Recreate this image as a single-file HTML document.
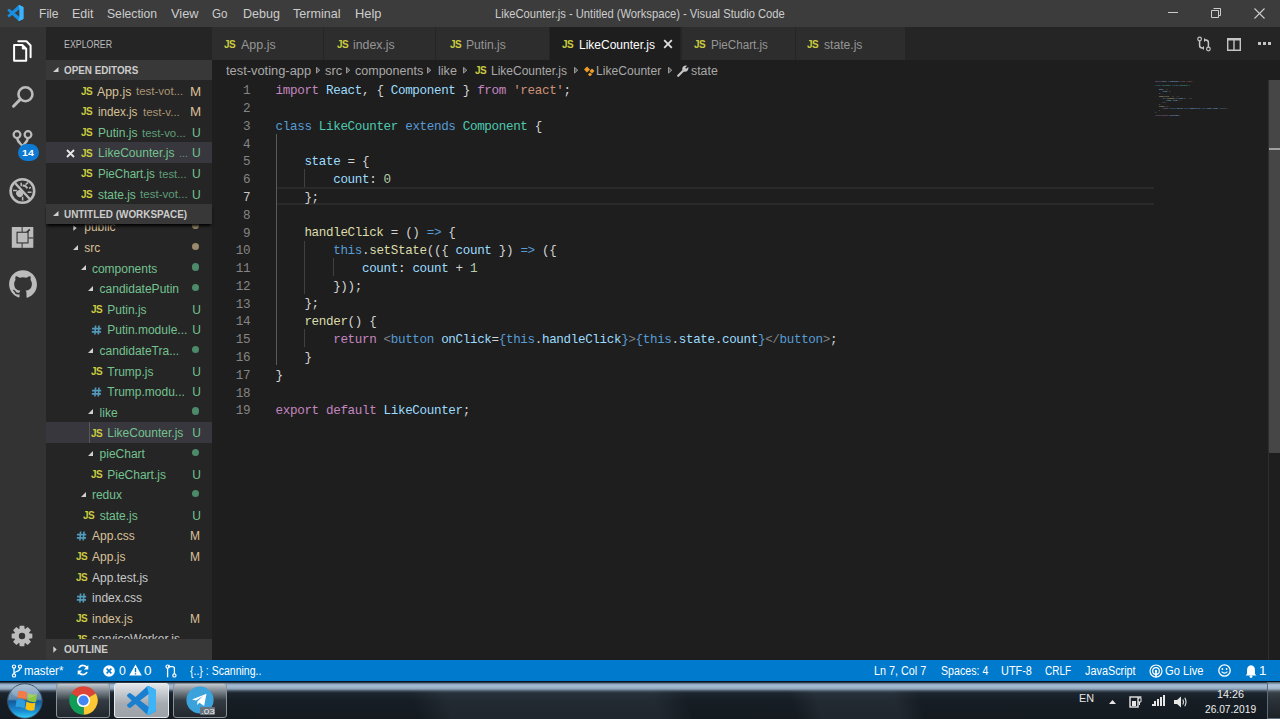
<!DOCTYPE html>
<html><head><meta charset="utf-8"><style>
html,body{margin:0;padding:0;width:1280px;height:719px;overflow:hidden;background:#1e1e1e;font-family:'Liberation Sans', sans-serif;}
#root{position:relative;width:1280px;height:719px;overflow:hidden;}
</style></head><body><div id="root">
<div style="position:absolute;left:0px;top:0px;width:1280px;height:27px;background:#3c3c3c;"></div>
<div style="position:absolute;left:0px;top:27px;width:46px;height:633px;background:#333333;"></div>
<div style="position:absolute;left:46px;top:27px;width:166px;height:633px;background:#252526;"></div>
<div style="position:absolute;left:212px;top:27px;width:1068px;height:33px;background:#252526;"></div>
<div style="position:absolute;left:212px;top:60px;width:1068px;height:600px;background:#1e1e1e;"></div>
<svg style="position:absolute;left:7px;top:5px;" width="17" height="16" viewBox="0 0 100 100"><path fill="#1a8ee0" d="M96.46 10.8L75.86.87a6.23 6.23 0 00-7.1 1.21L29.35 38.04 12.19 25.01a4.16 4.16 0 00-5.32.24L1.36 30.26a4.16 4.16 0 000 6.16L16.25 50 1.36 63.58a4.16 4.16 0 000 6.16l5.51 5.01a4.16 4.16 0 005.32.24l17.16-13.03 39.41 35.96a6.23 6.23 0 007.1 1.21l20.6-9.92A6.25 6.25 0 00100 83.8V16.2a6.25 6.25 0 00-3.54-5.4zM75.02 72.7L45.11 50l29.91-22.7z"/><path fill="#3cb4f7" d="M75.86.87L96.46 10.8A6.25 6.25 0 0 1 100 16.2V83.8A6.25 6.25 0 0 1 96.46 89.2L75.86 99.13A6.23 6.23 0 0 1 68.76 97.92L75.02 72.7V27.3L68.76 2.08A6.23 6.23 0 0 1 75.86.87z"/></svg>
<div style="position:absolute;left:38.97px;top:7.67px;font-family:'Liberation Sans', sans-serif;font-size:12.2px;line-height:12.2px;font-weight:400;color:#cccccc;white-space:pre;transform:scaleX(0.9961);transform-origin:0 0;">File</div>
<div style="position:absolute;left:72.27px;top:7.67px;font-family:'Liberation Sans', sans-serif;font-size:12.2px;line-height:12.2px;font-weight:400;color:#cccccc;white-space:pre;transform:scaleX(1.0213);transform-origin:0 0;">Edit</div>
<div style="position:absolute;left:107.27px;top:7.67px;font-family:'Liberation Sans', sans-serif;font-size:12.2px;line-height:12.2px;font-weight:400;color:#cccccc;white-space:pre;transform:scaleX(0.9985);transform-origin:0 0;">Selection</div>
<div style="position:absolute;left:170.67px;top:7.67px;font-family:'Liberation Sans', sans-serif;font-size:12.2px;line-height:12.2px;font-weight:400;color:#cccccc;white-space:pre;transform:scaleX(1.0519);transform-origin:0 0;">View</div>
<div style="position:absolute;left:211.77px;top:7.67px;font-family:'Liberation Sans', sans-serif;font-size:12.2px;line-height:12.2px;font-weight:400;color:#cccccc;white-space:pre;transform:scaleX(0.9507);transform-origin:0 0;">Go</div>
<div style="position:absolute;left:242.57px;top:7.67px;font-family:'Liberation Sans', sans-serif;font-size:12.2px;line-height:12.2px;font-weight:400;color:#cccccc;white-space:pre;transform:scaleX(1.0276);transform-origin:0 0;">Debug</div>
<div style="position:absolute;left:293.27px;top:7.67px;font-family:'Liberation Sans', sans-serif;font-size:12.2px;line-height:12.2px;font-weight:400;color:#cccccc;white-space:pre;transform:scaleX(1.0304);transform-origin:0 0;">Terminal</div>
<div style="position:absolute;left:355.07px;top:7.67px;font-family:'Liberation Sans', sans-serif;font-size:12.2px;line-height:12.2px;font-weight:400;color:#cccccc;white-space:pre;transform:scaleX(1.0553);transform-origin:0 0;">Help</div>
<div style="position:absolute;left:494.77px;top:7.67px;font-family:'Liberation Sans', sans-serif;font-size:12.2px;line-height:12.2px;font-weight:400;color:#cccccc;white-space:pre;transform:scaleX(0.9171);transform-origin:0 0;">LikeCounter.js - Untitled (Workspace) - Visual Studio Code</div>
<div style="position:absolute;left:1168px;top:12px;width:10px;height:1px;background:#cccccc;"></div>
<svg style="position:absolute;left:1210px;top:7px;" width="12" height="12" viewBox="0 0 12 12"><path d="M3.5 1.5h7v7h-2M1.5 3.5h7v7h-7z" fill="none" stroke="#cccccc" stroke-width="1"/></svg>
<svg style="position:absolute;left:1253px;top:7px;" width="12" height="12" viewBox="0 0 12 12"><path d="M1.5 1.5l10 10M11.5 1.5l-10 10" stroke="#cccccc" stroke-width="1.1"/></svg>
<svg style="position:absolute;left:0;top:27px" width="46" height="46" viewBox="0 27 46 46"><path d="M14.1 45.1H22.6L26.2 48.7V60.7H14.1Z" fill="none" stroke="#fff" stroke-width="2" stroke-linejoin="round"/><path d="M22.3 45.1V49H26.2Z" fill="#fff" stroke="#fff" stroke-width="1"/><path d="M18.3 41.3H26.4L30.6 45.5V57.3" fill="none" stroke="#fff" stroke-width="2" stroke-linecap="round" stroke-linejoin="round"/></svg>
<svg style="position:absolute;left:9px;top:82px;" width="28" height="28" viewBox="0 0 28 28"><circle cx="16.45" cy="12.25" r="7" fill="none" stroke="#bcbcbc" stroke-width="2.6"/><path d="M11.3 17.4 4.5 24.2" stroke="#bcbcbc" stroke-width="3" stroke-linecap="round"/></svg>
<svg style="position:absolute;left:8px;top:126px;" width="30" height="22" viewBox="0 0 30 22"><circle cx="9" cy="8.6" r="3.4" fill="none" stroke="#bcbcbc" stroke-width="2.2"/><circle cx="20" cy="8.6" r="3.4" fill="none" stroke="#bcbcbc" stroke-width="2.2"/><path d="M9 12 C9.5 16 13 18 14.5 20 M20 12 C19.5 16 16 18 14.5 20" fill="none" stroke="#bcbcbc" stroke-width="2.4"/></svg>
<div style="position:absolute;left:18px;top:143.7px;width:20.5px;height:17.3px;background:#0e7ad3;border-radius:9px"></div>
<div style="position:absolute;left:22.12px;top:147.67px;font-family:'Liberation Sans', sans-serif;font-size:9.6px;line-height:9.6px;font-weight:700;color:#ffffff;white-space:pre;transform:scaleX(1.1012);transform-origin:0 0;">14</div>
<svg style="position:absolute;left:0;top:166px" width="46" height="46" viewBox="0 166 46 46"><circle cx="22.4" cy="191" r="11.8" fill="none" stroke="#bcbcbc" stroke-width="2.6"/><path d="M15.2 183.2L29.8 199" stroke="#bcbcbc" stroke-width="2.4"/><ellipse cx="19.6" cy="193.6" rx="3.3" ry="3.6" transform="rotate(-45 19.6 193.6)" fill="#bcbcbc"/><path d="M22.6 185.5Q25.8 185.4 27.4 188.4" fill="none" stroke="#bcbcbc" stroke-width="1.8"/><path d="M13 190.6H17M21.2 182.8V186.2M27.6 192.3H31.5M22.6 196.8V200.4M25.5 184.6L28 182.6M29 188.2L31 187.4" stroke="#bcbcbc" stroke-width="1.5"/></svg>
<svg style="position:absolute;left:0;top:212px" width="46" height="46" viewBox="0 212 46 46"><rect x="11.8" y="227" width="21.5" height="20.8" fill="#bcbcbc"/><rect x="16.5" y="231.7" width="12.1" height="11.8" fill="#333333"/><rect x="21.6" y="227" width="1" height="20.8" fill="#333333"/><rect x="28.5" y="237.4" width="4.8" height="1.1" fill="#333333"/><path d="M25.6 233.6L29.8 229.4" stroke="#333333" stroke-width="1.6"/><rect x="17.6" y="232.8" width="9.9" height="9.6" fill="#bcbcbc"/></svg>
<svg style="position:absolute;left:9px;top:270px;" width="28" height="28" viewBox="0 0 28 28"><path fill="#bcbcbc" d="M14 0.3C6.3 0.3 0.1 6.5 0.1 14.2c0 6.1 4 11.3 9.5 13.2.7.1.95-.3.95-.67v-2.36c-3.87.84-4.68-1.64-4.68-1.64-.63-1.6-1.55-2.03-1.55-2.03-1.26-.86.1-.85.1-.85 1.4.1 2.13 1.43 2.13 1.43 1.24 2.13 3.26 1.52 4.06 1.16.12-.9.49-1.52.88-1.87-3.09-.35-6.34-1.55-6.34-6.88 0-1.52.54-2.76 1.43-3.73-.14-.35-.62-1.77.14-3.69 0 0 1.17-.37 3.82 1.43a13.3 13.3 0 0 1 6.96 0c2.65-1.8 3.82-1.43 3.82-1.43.76 1.92.28 3.34.14 3.69.89.97 1.43 2.21 1.43 3.73 0 5.34-3.25 6.52-6.35 6.87.5.43.94 1.28.94 2.58v3.82c0 .37.25.8.96.67 5.5-1.84 9.5-7.05 9.5-13.2C27.9 6.5 21.7.3 14 .3z"/></svg>
<svg style="position:absolute;left:11.4px;top:625.4px;" width="22" height="22" viewBox="0 0 22 22"><path fill="#bcbcbc" fill-rule="evenodd" d="M21.34 8.69 L21.34 13.31 L18.11 13.68 L17.92 14.14 L19.95 16.68 L16.68 19.95 L14.14 17.92 L13.68 18.11 L13.31 21.34 L8.69 21.34 L8.32 18.11 L7.86 17.92 L5.32 19.95 L2.05 16.68 L4.08 14.14 L3.89 13.68 L0.66 13.31 L0.66 8.69 L3.89 8.32 L4.08 7.86 L2.05 5.32 L5.32 2.05 L7.86 4.08 L8.32 3.89 L8.69 0.66 L13.31 0.66 L13.68 3.89 L14.14 4.08 L16.68 2.05 L19.95 5.32 L17.92 7.86 L18.11 8.32Z M14.2 11 A3.2 3.2 0 1 0 7.8 11 A3.2 3.2 0 1 0 14.2 11Z"/></svg>
<div style="position:absolute;left:64.16px;top:39.13px;font-family:'Liberation Sans', sans-serif;font-size:10.6px;line-height:10.6px;font-weight:400;color:#bbbbbb;white-space:pre;transform:scaleX(0.8331);transform-origin:0 0;">EXPLORER</div>
<div style="position:absolute;left:46px;top:60px;width:166px;height:20.3px;background:#383838;"></div>
<svg style="position:absolute;left:53.2px;top:66.6px;" width="5.5" height="5" viewBox="0 0 5.5 5"><path d="M5.5 0V5H0z" fill="#d0d0d0"/></svg>
<div style="position:absolute;left:64.14px;top:64.89px;font-family:'Liberation Sans', sans-serif;font-size:11px;line-height:11px;font-weight:700;color:#cccccc;white-space:pre;transform:scaleX(0.8961);transform-origin:0 0;">OPEN EDITORS</div>
<div style="position:absolute;left:81.23px;top:85.72px;font-family:'Liberation Sans', sans-serif;font-size:11.2px;line-height:11.2px;font-weight:700;color:#cbcb41;white-space:pre;transform:scaleX(0.8941);transform-origin:0 0;letter-spacing:-0.5px;">JS</div>
<div style="position:absolute;left:97.48px;top:85.54px;font-family:'Liberation Sans', sans-serif;font-size:12px;line-height:12px;font-weight:400;color:#d9c196;white-space:pre;transform:scaleX(1.0294);transform-origin:0 0;">App.js</div>
<div style="position:absolute;left:136.44px;top:86.39px;font-family:'Liberation Sans', sans-serif;font-size:11px;line-height:11px;font-weight:400;color:#a99472;white-space:pre;transform:scaleX(1.0435);transform-origin:0 0;">test-vot...</div>
<div style="position:absolute;left:189.88px;top:85.54px;font-family:'Liberation Sans', sans-serif;font-size:12px;line-height:12px;font-weight:400;color:#d9c196;white-space:pre;transform:scaleX(1.1140);transform-origin:0 0;">M</div>
<div style="position:absolute;left:81.23px;top:106.32px;font-family:'Liberation Sans', sans-serif;font-size:11.2px;line-height:11.2px;font-weight:700;color:#cbcb41;white-space:pre;transform:scaleX(0.8941);transform-origin:0 0;letter-spacing:-0.5px;">JS</div>
<div style="position:absolute;left:97.88px;top:106.14px;font-family:'Liberation Sans', sans-serif;font-size:12px;line-height:12px;font-weight:400;color:#d9c196;white-space:pre;transform:scaleX(0.9669);transform-origin:0 0;">index.js</div>
<div style="position:absolute;left:143.34px;top:106.99px;font-family:'Liberation Sans', sans-serif;font-size:11px;line-height:11px;font-weight:400;color:#a99472;white-space:pre;transform:scaleX(1.0445);transform-origin:0 0;">test-v...</div>
<div style="position:absolute;left:189.88px;top:106.14px;font-family:'Liberation Sans', sans-serif;font-size:12px;line-height:12px;font-weight:400;color:#d9c196;white-space:pre;transform:scaleX(1.1140);transform-origin:0 0;">M</div>
<div style="position:absolute;left:81.23px;top:126.92px;font-family:'Liberation Sans', sans-serif;font-size:11.2px;line-height:11.2px;font-weight:700;color:#cbcb41;white-space:pre;transform:scaleX(0.8941);transform-origin:0 0;letter-spacing:-0.5px;">JS</div>
<div style="position:absolute;left:97.88px;top:126.74px;font-family:'Liberation Sans', sans-serif;font-size:12px;line-height:12px;font-weight:400;color:#74c28f;white-space:pre;transform:scaleX(1.0020);transform-origin:0 0;">Putin.js</div>
<div style="position:absolute;left:142.14px;top:127.59px;font-family:'Liberation Sans', sans-serif;font-size:11px;line-height:11px;font-weight:400;color:#5e9e78;white-space:pre;transform:scaleX(1.0363);transform-origin:0 0;">test-vo...</div>
<div style="position:absolute;left:192.28px;top:126.74px;font-family:'Liberation Sans', sans-serif;font-size:12px;line-height:12px;font-weight:400;color:#74c28f;white-space:pre;transform:scaleX(1.0079);transform-origin:0 0;">U</div>
<div style="position:absolute;left:46px;top:142.2px;width:166px;height:20.5px;background:#37373d;"></div>
<svg style="position:absolute;left:66px;top:149.3px;" width="9" height="9" viewBox="0 0 9 9"><path d="M1 1l7 7M8 1l-7 7" stroke="#e8e8e8" stroke-width="1.8"/></svg>
<div style="position:absolute;left:81.23px;top:147.52px;font-family:'Liberation Sans', sans-serif;font-size:11.2px;line-height:11.2px;font-weight:700;color:#cbcb41;white-space:pre;transform:scaleX(0.8941);transform-origin:0 0;letter-spacing:-0.5px;">JS</div>
<div style="position:absolute;left:97.88px;top:147.34px;font-family:'Liberation Sans', sans-serif;font-size:12px;line-height:12px;font-weight:400;color:#74c28f;white-space:pre;transform:scaleX(1.0052);transform-origin:0 0;">LikeCounter.js</div>
<div style="position:absolute;left:178.74px;top:148.19px;font-family:'Liberation Sans', sans-serif;font-size:11px;line-height:11px;font-weight:400;color:#5e9e78;white-space:pre;transform:scaleX(0.9943);transform-origin:0 0;">...</div>
<div style="position:absolute;left:192.28px;top:147.34px;font-family:'Liberation Sans', sans-serif;font-size:12px;line-height:12px;font-weight:400;color:#74c28f;white-space:pre;transform:scaleX(1.0079);transform-origin:0 0;">U</div>
<div style="position:absolute;left:81.23px;top:168.12px;font-family:'Liberation Sans', sans-serif;font-size:11.2px;line-height:11.2px;font-weight:700;color:#cbcb41;white-space:pre;transform:scaleX(0.8941);transform-origin:0 0;letter-spacing:-0.5px;">JS</div>
<div style="position:absolute;left:97.88px;top:167.94px;font-family:'Liberation Sans', sans-serif;font-size:12px;line-height:12px;font-weight:400;color:#74c28f;white-space:pre;transform:scaleX(0.9685);transform-origin:0 0;">PieChart.js</div>
<div style="position:absolute;left:159.34px;top:168.79px;font-family:'Liberation Sans', sans-serif;font-size:11px;line-height:11px;font-weight:400;color:#5e9e78;white-space:pre;transform:scaleX(1.0228);transform-origin:0 0;">test...</div>
<div style="position:absolute;left:192.28px;top:167.94px;font-family:'Liberation Sans', sans-serif;font-size:12px;line-height:12px;font-weight:400;color:#74c28f;white-space:pre;transform:scaleX(1.0079);transform-origin:0 0;">U</div>
<div style="position:absolute;left:81.23px;top:188.72px;font-family:'Liberation Sans', sans-serif;font-size:11.2px;line-height:11.2px;font-weight:700;color:#cbcb41;white-space:pre;transform:scaleX(0.8941);transform-origin:0 0;letter-spacing:-0.5px;">JS</div>
<div style="position:absolute;left:97.88px;top:188.54px;font-family:'Liberation Sans', sans-serif;font-size:12px;line-height:12px;font-weight:400;color:#74c28f;white-space:pre;transform:scaleX(0.9954);transform-origin:0 0;">state.js</div>
<div style="position:absolute;left:140.14px;top:189.39px;font-family:'Liberation Sans', sans-serif;font-size:11px;line-height:11px;font-weight:400;color:#5e9e78;white-space:pre;transform:scaleX(1.0546);transform-origin:0 0;">test-vot...</div>
<div style="position:absolute;left:192.28px;top:188.54px;font-family:'Liberation Sans', sans-serif;font-size:12px;line-height:12px;font-weight:400;color:#74c28f;white-space:pre;transform:scaleX(1.0079);transform-origin:0 0;">U</div>
<div style="position:absolute;left:46px;top:224px;width:166px;height:415px;overflow:hidden">
<svg style="position:absolute;left:27.0px;top:0.5999999999999943px;" width="4" height="6" viewBox="0 0 4 6"><path d="M0.3 0.3L3.7 3 0.3 5.7z" fill="#d0d0d0"/></svg>
<div style="position:absolute;left:38.28px;top:-2.56px;font-family:'Liberation Sans', sans-serif;font-size:12px;line-height:12px;font-weight:400;color:#d9c196;white-space:pre;">public</div>
<div style="position:absolute;left:145.6px;top:-2.0000000000000053px;width:7.4px;height:7.4px;background:#9c8a6d;border-radius:50%"></div>
<svg style="position:absolute;left:27.0px;top:20.599999999999987px;" width="5" height="5" viewBox="0 0 5 5"><path d="M5 0V5H0z" fill="#d0d0d0"/></svg>
<div style="position:absolute;left:38.28px;top:18.04px;font-family:'Liberation Sans', sans-serif;font-size:12px;line-height:12px;font-weight:400;color:#d9c196;white-space:pre;">src</div>
<div style="position:absolute;left:145.6px;top:18.599999999999987px;width:7.4px;height:7.4px;background:#9c8a6d;border-radius:50%"></div>
<svg style="position:absolute;left:34.599999999999994px;top:41.20000000000001px;" width="5" height="5" viewBox="0 0 5 5"><path d="M5 0V5H0z" fill="#d0d0d0"/></svg>
<div style="position:absolute;left:45.93px;top:38.64px;font-family:'Liberation Sans', sans-serif;font-size:12px;line-height:12px;font-weight:400;color:#74c28f;white-space:pre;">components</div>
<div style="position:absolute;left:145.6px;top:39.20000000000001px;width:7.4px;height:7.4px;background:#4d8a69;border-radius:50%"></div>
<svg style="position:absolute;left:42.2px;top:61.799999999999976px;" width="5" height="5" viewBox="0 0 5 5"><path d="M5 0V5H0z" fill="#d0d0d0"/></svg>
<div style="position:absolute;left:53.58px;top:59.24px;font-family:'Liberation Sans', sans-serif;font-size:12px;line-height:12px;font-weight:400;color:#74c28f;white-space:pre;">candidatePutin</div>
<div style="position:absolute;left:145.6px;top:59.799999999999976px;width:7.4px;height:7.4px;background:#4d8a69;border-radius:50%"></div>
<div style="position:absolute;left:44.53px;top:80.02px;font-family:'Liberation Sans', sans-serif;font-size:11.2px;line-height:11.2px;font-weight:700;color:#cbcb41;white-space:pre;transform:scaleX(0.8941);transform-origin:0 0;letter-spacing:-0.5px;">JS</div>
<div style="position:absolute;left:61.28px;top:79.84px;font-family:'Liberation Sans', sans-serif;font-size:12px;line-height:12px;font-weight:400;color:#74c28f;white-space:pre;">Putin.js</div>
<div style="position:absolute;left:146.28px;top:79.84px;font-family:'Liberation Sans', sans-serif;font-size:12px;line-height:12px;font-weight:400;color:#74c28f;white-space:pre;">U</div>
<svg style="position:absolute;left:44.7px;top:100.10000000000002px;" width="11" height="11" viewBox="0 0 11 11"><path d="M4.6 1.5L3.9 10.5M8 1.5L7.3 10.5M1 4.6H10.2M0.8 7.9H10" stroke="#519aba" stroke-width="1.6" fill="none"/></svg>
<div style="position:absolute;left:61.28px;top:100.44px;font-family:'Liberation Sans', sans-serif;font-size:12px;line-height:12px;font-weight:400;color:#74c28f;white-space:pre;">Putin.module...</div>
<div style="position:absolute;left:146.28px;top:100.44px;font-family:'Liberation Sans', sans-serif;font-size:12px;line-height:12px;font-weight:400;color:#74c28f;white-space:pre;">U</div>
<svg style="position:absolute;left:42.2px;top:123.6px;" width="5" height="5" viewBox="0 0 5 5"><path d="M5 0V5H0z" fill="#d0d0d0"/></svg>
<div style="position:absolute;left:53.58px;top:121.04px;font-family:'Liberation Sans', sans-serif;font-size:12px;line-height:12px;font-weight:400;color:#74c28f;white-space:pre;">candidateTra...</div>
<div style="position:absolute;left:145.6px;top:121.6px;width:7.4px;height:7.4px;background:#4d8a69;border-radius:50%"></div>
<div style="position:absolute;left:44.53px;top:141.82px;font-family:'Liberation Sans', sans-serif;font-size:11.2px;line-height:11.2px;font-weight:700;color:#cbcb41;white-space:pre;transform:scaleX(0.8941);transform-origin:0 0;letter-spacing:-0.5px;">JS</div>
<div style="position:absolute;left:61.28px;top:141.64px;font-family:'Liberation Sans', sans-serif;font-size:12px;line-height:12px;font-weight:400;color:#74c28f;white-space:pre;">Trump.js</div>
<div style="position:absolute;left:146.28px;top:141.64px;font-family:'Liberation Sans', sans-serif;font-size:12px;line-height:12px;font-weight:400;color:#74c28f;white-space:pre;">U</div>
<svg style="position:absolute;left:44.7px;top:161.89999999999998px;" width="11" height="11" viewBox="0 0 11 11"><path d="M4.6 1.5L3.9 10.5M8 1.5L7.3 10.5M1 4.6H10.2M0.8 7.9H10" stroke="#519aba" stroke-width="1.6" fill="none"/></svg>
<div style="position:absolute;left:61.28px;top:162.24px;font-family:'Liberation Sans', sans-serif;font-size:12px;line-height:12px;font-weight:400;color:#74c28f;white-space:pre;">Trump.modu...</div>
<div style="position:absolute;left:146.28px;top:162.24px;font-family:'Liberation Sans', sans-serif;font-size:12px;line-height:12px;font-weight:400;color:#74c28f;white-space:pre;">U</div>
<svg style="position:absolute;left:42.2px;top:185.4px;" width="5" height="5" viewBox="0 0 5 5"><path d="M5 0V5H0z" fill="#d0d0d0"/></svg>
<div style="position:absolute;left:53.58px;top:182.84px;font-family:'Liberation Sans', sans-serif;font-size:12px;line-height:12px;font-weight:400;color:#74c28f;white-space:pre;">like</div>
<div style="position:absolute;left:145.6px;top:183.4px;width:7.4px;height:7.4px;background:#4d8a69;border-radius:50%"></div>
<div style="position:absolute;left:0px;top:198.3px;width:166px;height:20.5px;background:#37373d;"></div>
<div style="position:absolute;left:43px;top:198.3px;width:1px;height:20.5px;background:#585858;"></div>
<div style="position:absolute;left:44.53px;top:203.62px;font-family:'Liberation Sans', sans-serif;font-size:11.2px;line-height:11.2px;font-weight:700;color:#cbcb41;white-space:pre;transform:scaleX(0.8941);transform-origin:0 0;letter-spacing:-0.5px;">JS</div>
<div style="position:absolute;left:61.28px;top:203.44px;font-family:'Liberation Sans', sans-serif;font-size:12px;line-height:12px;font-weight:400;color:#74c28f;white-space:pre;">LikeCounter.js</div>
<div style="position:absolute;left:146.28px;top:203.44px;font-family:'Liberation Sans', sans-serif;font-size:12px;line-height:12px;font-weight:400;color:#74c28f;white-space:pre;">U</div>
<svg style="position:absolute;left:42.2px;top:226.60000000000005px;" width="5" height="5" viewBox="0 0 5 5"><path d="M5 0V5H0z" fill="#d0d0d0"/></svg>
<div style="position:absolute;left:53.58px;top:224.04px;font-family:'Liberation Sans', sans-serif;font-size:12px;line-height:12px;font-weight:400;color:#74c28f;white-space:pre;">pieChart</div>
<div style="position:absolute;left:145.6px;top:224.60000000000005px;width:7.4px;height:7.4px;background:#4d8a69;border-radius:50%"></div>
<div style="position:absolute;left:44.53px;top:244.82px;font-family:'Liberation Sans', sans-serif;font-size:11.2px;line-height:11.2px;font-weight:700;color:#cbcb41;white-space:pre;transform:scaleX(0.8941);transform-origin:0 0;letter-spacing:-0.5px;">JS</div>
<div style="position:absolute;left:61.28px;top:244.64px;font-family:'Liberation Sans', sans-serif;font-size:12px;line-height:12px;font-weight:400;color:#74c28f;white-space:pre;">PieChart.js</div>
<div style="position:absolute;left:146.28px;top:244.64px;font-family:'Liberation Sans', sans-serif;font-size:12px;line-height:12px;font-weight:400;color:#74c28f;white-space:pre;">U</div>
<svg style="position:absolute;left:34.599999999999994px;top:267.79999999999995px;" width="5" height="5" viewBox="0 0 5 5"><path d="M5 0V5H0z" fill="#d0d0d0"/></svg>
<div style="position:absolute;left:45.93px;top:265.24px;font-family:'Liberation Sans', sans-serif;font-size:12px;line-height:12px;font-weight:400;color:#74c28f;white-space:pre;">redux</div>
<div style="position:absolute;left:145.6px;top:265.79999999999995px;width:7.4px;height:7.4px;background:#4d8a69;border-radius:50%"></div>
<div style="position:absolute;left:37.03px;top:286.02px;font-family:'Liberation Sans', sans-serif;font-size:11.2px;line-height:11.2px;font-weight:700;color:#cbcb41;white-space:pre;transform:scaleX(0.8941);transform-origin:0 0;letter-spacing:-0.5px;">JS</div>
<div style="position:absolute;left:53.68px;top:285.84px;font-family:'Liberation Sans', sans-serif;font-size:12px;line-height:12px;font-weight:400;color:#74c28f;white-space:pre;">state.js</div>
<div style="position:absolute;left:146.28px;top:285.84px;font-family:'Liberation Sans', sans-serif;font-size:12px;line-height:12px;font-weight:400;color:#74c28f;white-space:pre;">U</div>
<svg style="position:absolute;left:29.700000000000003px;top:306.1px;" width="11" height="11" viewBox="0 0 11 11"><path d="M4.6 1.5L3.9 10.5M8 1.5L7.3 10.5M1 4.6H10.2M0.8 7.9H10" stroke="#519aba" stroke-width="1.6" fill="none"/></svg>
<div style="position:absolute;left:46.08px;top:306.44px;font-family:'Liberation Sans', sans-serif;font-size:12px;line-height:12px;font-weight:400;color:#d9c196;white-space:pre;">App.css</div>
<div style="position:absolute;left:143.88px;top:306.44px;font-family:'Liberation Sans', sans-serif;font-size:12px;line-height:12px;font-weight:400;color:#d9c196;white-space:pre;">M</div>
<div style="position:absolute;left:29.53px;top:327.22px;font-family:'Liberation Sans', sans-serif;font-size:11.2px;line-height:11.2px;font-weight:700;color:#cbcb41;white-space:pre;transform:scaleX(0.8941);transform-origin:0 0;letter-spacing:-0.5px;">JS</div>
<div style="position:absolute;left:46.08px;top:327.04px;font-family:'Liberation Sans', sans-serif;font-size:12px;line-height:12px;font-weight:400;color:#d9c196;white-space:pre;">App.js</div>
<div style="position:absolute;left:143.88px;top:327.04px;font-family:'Liberation Sans', sans-serif;font-size:12px;line-height:12px;font-weight:400;color:#d9c196;white-space:pre;">M</div>
<div style="position:absolute;left:29.53px;top:347.82px;font-family:'Liberation Sans', sans-serif;font-size:11.2px;line-height:11.2px;font-weight:700;color:#cbcb41;white-space:pre;transform:scaleX(0.8941);transform-origin:0 0;letter-spacing:-0.5px;">JS</div>
<div style="position:absolute;left:46.08px;top:347.64px;font-family:'Liberation Sans', sans-serif;font-size:12px;line-height:12px;font-weight:400;color:#c8c8c8;white-space:pre;">App.test.js</div>
<svg style="position:absolute;left:29.700000000000003px;top:367.9px;" width="11" height="11" viewBox="0 0 11 11"><path d="M4.6 1.5L3.9 10.5M8 1.5L7.3 10.5M1 4.6H10.2M0.8 7.9H10" stroke="#519aba" stroke-width="1.6" fill="none"/></svg>
<div style="position:absolute;left:46.08px;top:368.24px;font-family:'Liberation Sans', sans-serif;font-size:12px;line-height:12px;font-weight:400;color:#c8c8c8;white-space:pre;">index.css</div>
<div style="position:absolute;left:29.53px;top:389.02px;font-family:'Liberation Sans', sans-serif;font-size:11.2px;line-height:11.2px;font-weight:700;color:#cbcb41;white-space:pre;transform:scaleX(0.8941);transform-origin:0 0;letter-spacing:-0.5px;">JS</div>
<div style="position:absolute;left:46.08px;top:388.84px;font-family:'Liberation Sans', sans-serif;font-size:12px;line-height:12px;font-weight:400;color:#d9c196;white-space:pre;">index.js</div>
<div style="position:absolute;left:143.88px;top:388.84px;font-family:'Liberation Sans', sans-serif;font-size:12px;line-height:12px;font-weight:400;color:#d9c196;white-space:pre;">M</div>
<div style="position:absolute;left:29.53px;top:409.62px;font-family:'Liberation Sans', sans-serif;font-size:11.2px;line-height:11.2px;font-weight:700;color:#cbcb41;white-space:pre;transform:scaleX(0.8941);transform-origin:0 0;letter-spacing:-0.5px;">JS</div>
<div style="position:absolute;left:46.08px;top:409.44px;font-family:'Liberation Sans', sans-serif;font-size:12px;line-height:12px;font-weight:400;color:#c8c8c8;white-space:pre;">serviceWorker.js</div>
</div>
<div style="position:absolute;left:46px;top:204px;width:166px;height:20.3px;background:#383838;box-shadow:0 3px 3px -1px #000"></div>
<svg style="position:absolute;left:53.2px;top:210.6px;" width="5.5" height="5" viewBox="0 0 5.5 5"><path d="M5.5 0V5H0z" fill="#d0d0d0"/></svg>
<div style="position:absolute;left:64.14px;top:208.89px;font-family:'Liberation Sans', sans-serif;font-size:11px;line-height:11px;font-weight:700;color:#cccccc;white-space:pre;transform:scaleX(0.9007);transform-origin:0 0;">UNTITLED (WORKSPACE)</div>
<div style="position:absolute;left:46px;top:639.3px;width:166px;height:20.3px;background:#383838;"></div>
<svg style="position:absolute;left:53px;top:645.5999999999999px;" width="4" height="7" viewBox="0 0 4 7"><path d="M0.3 0.3L3.7 3.5 0.3 6.7z" fill="#d0d0d0"/></svg>
<div style="position:absolute;left:64.14px;top:644.19px;font-family:'Liberation Sans', sans-serif;font-size:11px;line-height:11px;font-weight:700;color:#cccccc;white-space:pre;transform:scaleX(0.9117);transform-origin:0 0;">OUTLINE</div>
<div style="position:absolute;left:212px;top:27px;width:110.80000000000001px;height:33px;background:#2d2d2d;"></div>
<div style="position:absolute;left:224.03px;top:38.82px;font-family:'Liberation Sans', sans-serif;font-size:11.2px;line-height:11.2px;font-weight:700;color:#cbcb41;white-space:pre;transform:scaleX(0.8941);transform-origin:0 0;letter-spacing:-0.5px;">JS</div>
<div style="position:absolute;left:240.88px;top:38.64px;font-family:'Liberation Sans', sans-serif;font-size:12px;line-height:12px;font-weight:400;color:#969696;white-space:pre;transform:scaleX(1.0384);transform-origin:0 0;">App.js</div>
<div style="position:absolute;left:323.8px;top:27px;width:111.59999999999997px;height:33px;background:#2d2d2d;"></div>
<div style="position:absolute;left:337.13px;top:38.82px;font-family:'Liberation Sans', sans-serif;font-size:11.2px;line-height:11.2px;font-weight:700;color:#cbcb41;white-space:pre;transform:scaleX(0.8941);transform-origin:0 0;letter-spacing:-0.5px;">JS</div>
<div style="position:absolute;left:353.48px;top:38.64px;font-family:'Liberation Sans', sans-serif;font-size:12px;line-height:12px;font-weight:400;color:#969696;white-space:pre;transform:scaleX(1.0259);transform-origin:0 0;">index.js</div>
<div style="position:absolute;left:436.4px;top:27px;width:112.20000000000005px;height:33px;background:#2d2d2d;"></div>
<div style="position:absolute;left:449.63px;top:38.82px;font-family:'Liberation Sans', sans-serif;font-size:11.2px;line-height:11.2px;font-weight:700;color:#cbcb41;white-space:pre;transform:scaleX(0.8941);transform-origin:0 0;letter-spacing:-0.5px;">JS</div>
<div style="position:absolute;left:465.88px;top:38.64px;font-family:'Liberation Sans', sans-serif;font-size:12px;line-height:12px;font-weight:400;color:#969696;white-space:pre;transform:scaleX(1.0122);transform-origin:0 0;">Putin.js</div>
<div style="position:absolute;left:549.6px;top:27px;width:130.89999999999998px;height:33px;background:#1e1e1e;"></div>
<div style="position:absolute;left:561.93px;top:38.82px;font-family:'Liberation Sans', sans-serif;font-size:11.2px;line-height:11.2px;font-weight:700;color:#cbcb41;white-space:pre;transform:scaleX(0.8941);transform-origin:0 0;letter-spacing:-0.5px;">JS</div>
<div style="position:absolute;left:578.68px;top:38.64px;font-family:'Liberation Sans', sans-serif;font-size:12px;line-height:12px;font-weight:400;color:#ffffff;white-space:pre;transform:scaleX(0.9999);transform-origin:0 0;">LikeCounter.js</div>
<svg style="position:absolute;left:663px;top:39px;" width="10" height="10" viewBox="0 0 10 10"><path d="M1.2 1.2l7.6 7.6M8.8 1.2l-7.6 7.6" stroke="#e0e0e0" stroke-width="1.8"/></svg>
<div style="position:absolute;left:681.5px;top:27px;width:113.20000000000005px;height:33px;background:#2d2d2d;"></div>
<div style="position:absolute;left:694.33px;top:38.82px;font-family:'Liberation Sans', sans-serif;font-size:11.2px;line-height:11.2px;font-weight:700;color:#cbcb41;white-space:pre;transform:scaleX(0.8941);transform-origin:0 0;letter-spacing:-0.5px;">JS</div>
<div style="position:absolute;left:711.28px;top:38.64px;font-family:'Liberation Sans', sans-serif;font-size:12px;line-height:12px;font-weight:400;color:#969696;white-space:pre;transform:scaleX(0.9702);transform-origin:0 0;">PieChart.js</div>
<div style="position:absolute;left:795.7px;top:27px;width:109.29999999999995px;height:33px;background:#2d2d2d;"></div>
<div style="position:absolute;left:807.33px;top:38.82px;font-family:'Liberation Sans', sans-serif;font-size:11.2px;line-height:11.2px;font-weight:700;color:#cbcb41;white-space:pre;transform:scaleX(0.8941);transform-origin:0 0;letter-spacing:-0.5px;">JS</div>
<div style="position:absolute;left:823.68px;top:38.64px;font-family:'Liberation Sans', sans-serif;font-size:12px;line-height:12px;font-weight:400;color:#969696;white-space:pre;transform:scaleX(1.0112);transform-origin:0 0;">state.js</div>
<svg style="position:absolute;left:1196px;top:36px;" width="16" height="16" viewBox="0 0 16 16"><circle cx="3.6" cy="3" r="1.8" fill="none" stroke="#c5c5c5" stroke-width="1.2"/><circle cx="12.4" cy="13" r="1.8" fill="none" stroke="#c5c5c5" stroke-width="1.2"/><path d="M3.6 4.8V9.5Q3.6 12 6.5 12" fill="none" stroke="#c5c5c5" stroke-width="1.5"/><path d="M5.5 12l2.5-2v4z" fill="#c5c5c5"/><path d="M12.4 11.2V6.5Q12.4 4 9.5 4" fill="none" stroke="#c5c5c5" stroke-width="1.5"/><path d="M10.5 4l-2.5 2V2z" fill="#c5c5c5"/></svg>
<svg style="position:absolute;left:1226px;top:37px;" width="16" height="15" viewBox="0 0 16 15"><path d="M1 1h14v13H1z M2.4 3.5v9.1h4.9V3.5z M8.7 3.5v9.1h4.9V3.5z" fill="#c5c5c5" fill-rule="evenodd"/></svg>
<div style="position:absolute;left:1258.2px;top:42.4px;width:2.6px;height:2.6px;background:#c5c5c5;"></div>
<div style="position:absolute;left:1263.2px;top:42.4px;width:2.6px;height:2.6px;background:#c5c5c5;"></div>
<div style="position:absolute;left:1268.2px;top:42.4px;width:2.6px;height:2.6px;background:#c5c5c5;"></div>
<div style="position:absolute;left:226.18px;top:64.84px;font-family:'Liberation Sans', sans-serif;font-size:12px;line-height:12px;font-weight:400;color:#a9a9a9;white-space:pre;transform:scaleX(1.0724);transform-origin:0 0;">test-voting-app</div>
<svg style="position:absolute;left:316.4px;top:67px;" width="5" height="7" viewBox="0 0 5 7"><path d="M0.5 0.3L3.8 3.2 0.5 6.1z" fill="#5a5a5a" stroke="#a0a0a0" stroke-width="0.9" stroke-linejoin="round"/></svg>
<div style="position:absolute;left:324.88px;top:64.84px;font-family:'Liberation Sans', sans-serif;font-size:12px;line-height:12px;font-weight:400;color:#a9a9a9;white-space:pre;transform:scaleX(1.0681);transform-origin:0 0;">src</div>
<svg style="position:absolute;left:346.4px;top:67px;" width="5" height="7" viewBox="0 0 5 7"><path d="M0.5 0.3L3.8 3.2 0.5 6.1z" fill="#5a5a5a" stroke="#a0a0a0" stroke-width="0.9" stroke-linejoin="round"/></svg>
<div style="position:absolute;left:355.03px;top:64.84px;font-family:'Liberation Sans', sans-serif;font-size:12px;line-height:12px;font-weight:400;color:#a9a9a9;white-space:pre;transform:scaleX(1.0431);transform-origin:0 0;">components</div>
<svg style="position:absolute;left:427.2px;top:67px;" width="5" height="7" viewBox="0 0 5 7"><path d="M0.5 0.3L3.8 3.2 0.5 6.1z" fill="#5a5a5a" stroke="#a0a0a0" stroke-width="0.9" stroke-linejoin="round"/></svg>
<div style="position:absolute;left:437.68px;top:64.84px;font-family:'Liberation Sans', sans-serif;font-size:12px;line-height:12px;font-weight:400;color:#a9a9a9;white-space:pre;transform:scaleX(1.0513);transform-origin:0 0;">like</div>
<svg style="position:absolute;left:462.9px;top:67px;" width="5" height="7" viewBox="0 0 5 7"><path d="M0.5 0.3L3.8 3.2 0.5 6.1z" fill="#5a5a5a" stroke="#a0a0a0" stroke-width="0.9" stroke-linejoin="round"/></svg>
<div style="position:absolute;left:475.33px;top:65.02px;font-family:'Liberation Sans', sans-serif;font-size:11.2px;line-height:11.2px;font-weight:700;color:#cbcb41;white-space:pre;transform:scaleX(0.8941);transform-origin:0 0;letter-spacing:-0.5px;">JS</div>
<div style="position:absolute;left:491.28px;top:64.84px;font-family:'Liberation Sans', sans-serif;font-size:12px;line-height:12px;font-weight:400;color:#a9a9a9;white-space:pre;transform:scaleX(0.9999);transform-origin:0 0;">LikeCounter.js</div>
<svg style="position:absolute;left:574.0px;top:67px;" width="5" height="7" viewBox="0 0 5 7"><path d="M0.5 0.3L3.8 3.2 0.5 6.1z" fill="#5a5a5a" stroke="#a0a0a0" stroke-width="0.9" stroke-linejoin="round"/></svg>
<svg style="position:absolute;left:583px;top:65px;" width="12" height="11" viewBox="0 0 12 11"><path d="M1 4.5L4 1.5 7 4.5 4 7.5z" fill="#ee9d28"/><path d="M6.5 6L9 3.5 11.5 6 9 8.5z" fill="#ee9d28"/><path d="M5 9.5L7 7.5 9 9.5 7 11.5z" fill="#ee9d28"/></svg>
<div style="position:absolute;left:596.28px;top:64.84px;font-family:'Liberation Sans', sans-serif;font-size:12px;line-height:12px;font-weight:400;color:#a9a9a9;white-space:pre;transform:scaleX(1.0081);transform-origin:0 0;">LikeCounter</div>
<svg style="position:absolute;left:667.8000000000001px;top:67px;" width="5" height="7" viewBox="0 0 5 7"><path d="M0.5 0.3L3.8 3.2 0.5 6.1z" fill="#5a5a5a" stroke="#a0a0a0" stroke-width="0.9" stroke-linejoin="round"/></svg>
<svg style="position:absolute;left:677px;top:64.5px;" width="12" height="12" viewBox="0 0 12 12"><path d="M1.2 10.8L6 6" stroke="#c5c5c5" stroke-width="2.2" stroke-linecap="round"/><path d="M5.2 4.6A3.6 3.6 0 0 1 10 0.8L8.2 2.8 9.2 3.8 11.2 2A3.6 3.6 0 0 1 7.4 6.8z" fill="#c5c5c5"/></svg>
<div style="position:absolute;left:690.98px;top:64.84px;font-family:'Liberation Sans', sans-serif;font-size:12px;line-height:12px;font-weight:400;color:#a9a9a9;white-space:pre;transform:scaleX(1.0278);transform-origin:0 0;">state</div>
<div style="position:absolute;left:276.6px;top:187px;width:877.4px;height:14px;background:transparent;border-top:2px solid #2a2a2a;border-bottom:2px solid #2a2a2a;"></div>
<div style="position:absolute;left:275.6px;top:133.84px;width:1px;height:231.14000000000001px;background:#5a5a5a;"></div>
<div style="position:absolute;left:304.40000000000003px;top:169.4px;width:1px;height:17.78px;background:#404040;"></div>
<div style="position:absolute;left:304.40000000000003px;top:240.52px;width:1px;height:53.34px;background:#404040;"></div>
<div style="position:absolute;left:333.20000000000005px;top:258.3px;width:1px;height:17.78px;background:#404040;"></div>
<div style="position:absolute;left:304.40000000000003px;top:329.42px;width:1px;height:17.78px;background:#404040;"></div>
<div style="position:absolute;left:243.04px;top:85.34px;font-family:'Liberation Mono', monospace;font-size:12.6px;line-height:12.6px;font-weight:400;color:#858585;white-space:pre;letter-spacing:-0.4px;">1</div>
<div style="position:absolute;left:243.04px;top:103.12px;font-family:'Liberation Mono', monospace;font-size:12.6px;line-height:12.6px;font-weight:400;color:#858585;white-space:pre;letter-spacing:-0.4px;">2</div>
<div style="position:absolute;left:243.04px;top:120.90px;font-family:'Liberation Mono', monospace;font-size:12.6px;line-height:12.6px;font-weight:400;color:#858585;white-space:pre;letter-spacing:-0.4px;">3</div>
<div style="position:absolute;left:243.04px;top:138.68px;font-family:'Liberation Mono', monospace;font-size:12.6px;line-height:12.6px;font-weight:400;color:#858585;white-space:pre;letter-spacing:-0.4px;">4</div>
<div style="position:absolute;left:243.04px;top:156.46px;font-family:'Liberation Mono', monospace;font-size:12.6px;line-height:12.6px;font-weight:400;color:#858585;white-space:pre;letter-spacing:-0.4px;">5</div>
<div style="position:absolute;left:243.04px;top:174.24px;font-family:'Liberation Mono', monospace;font-size:12.6px;line-height:12.6px;font-weight:400;color:#858585;white-space:pre;letter-spacing:-0.4px;">6</div>
<div style="position:absolute;left:243.04px;top:192.02px;font-family:'Liberation Mono', monospace;font-size:12.6px;line-height:12.6px;font-weight:400;color:#c6c6c6;white-space:pre;letter-spacing:-0.4px;">7</div>
<div style="position:absolute;left:243.04px;top:209.80px;font-family:'Liberation Mono', monospace;font-size:12.6px;line-height:12.6px;font-weight:400;color:#858585;white-space:pre;letter-spacing:-0.4px;">8</div>
<div style="position:absolute;left:243.04px;top:227.58px;font-family:'Liberation Mono', monospace;font-size:12.6px;line-height:12.6px;font-weight:400;color:#858585;white-space:pre;letter-spacing:-0.4px;">9</div>
<div style="position:absolute;left:235.84px;top:245.36px;font-family:'Liberation Mono', monospace;font-size:12.6px;line-height:12.6px;font-weight:400;color:#858585;white-space:pre;letter-spacing:-0.4px;">10</div>
<div style="position:absolute;left:235.84px;top:263.14px;font-family:'Liberation Mono', monospace;font-size:12.6px;line-height:12.6px;font-weight:400;color:#858585;white-space:pre;letter-spacing:-0.4px;">11</div>
<div style="position:absolute;left:235.84px;top:280.92px;font-family:'Liberation Mono', monospace;font-size:12.6px;line-height:12.6px;font-weight:400;color:#858585;white-space:pre;letter-spacing:-0.4px;">12</div>
<div style="position:absolute;left:235.84px;top:298.70px;font-family:'Liberation Mono', monospace;font-size:12.6px;line-height:12.6px;font-weight:400;color:#858585;white-space:pre;letter-spacing:-0.4px;">13</div>
<div style="position:absolute;left:235.84px;top:316.48px;font-family:'Liberation Mono', monospace;font-size:12.6px;line-height:12.6px;font-weight:400;color:#858585;white-space:pre;letter-spacing:-0.4px;">14</div>
<div style="position:absolute;left:235.84px;top:334.26px;font-family:'Liberation Mono', monospace;font-size:12.6px;line-height:12.6px;font-weight:400;color:#858585;white-space:pre;letter-spacing:-0.4px;">15</div>
<div style="position:absolute;left:235.84px;top:352.04px;font-family:'Liberation Mono', monospace;font-size:12.6px;line-height:12.6px;font-weight:400;color:#858585;white-space:pre;letter-spacing:-0.4px;">16</div>
<div style="position:absolute;left:235.84px;top:369.82px;font-family:'Liberation Mono', monospace;font-size:12.6px;line-height:12.6px;font-weight:400;color:#858585;white-space:pre;letter-spacing:-0.4px;">17</div>
<div style="position:absolute;left:235.84px;top:387.60px;font-family:'Liberation Mono', monospace;font-size:12.6px;line-height:12.6px;font-weight:400;color:#858585;white-space:pre;letter-spacing:-0.4px;">18</div>
<div style="position:absolute;left:235.84px;top:405.38px;font-family:'Liberation Mono', monospace;font-size:12.6px;line-height:12.6px;font-weight:400;color:#858585;white-space:pre;letter-spacing:-0.4px;">19</div>
<div style="position:absolute;left:275.6px;top:0;font-family:'Liberation Mono', monospace;font-size:12.6px;letter-spacing:-0.36px;white-space:pre;">
<div style="position:absolute;left:0;top:85.04px;line-height:12.6px;"><span style="color:#c586c0">import</span><span style="color:#d4d4d4"> </span><span style="color:#9cdcfe">React</span><span style="color:#d4d4d4">, { </span><span style="color:#9cdcfe">Component</span><span style="color:#d4d4d4"> } </span><span style="color:#c586c0">from</span><span style="color:#d4d4d4"> </span><span style="color:#ce9178">&#x27;react&#x27;</span><span style="color:#d4d4d4">;</span></div>
<div style="position:absolute;left:0;top:120.60px;line-height:12.6px;"><span style="color:#569cd6">class</span><span style="color:#d4d4d4"> </span><span style="color:#4ec9b0">LikeCounter</span><span style="color:#d4d4d4"> </span><span style="color:#569cd6">extends</span><span style="color:#d4d4d4"> </span><span style="color:#4ec9b0">Component</span><span style="color:#d4d4d4"> {</span></div>
<div style="position:absolute;left:0;top:156.16px;line-height:12.6px;"><span style="color:#d4d4d4">    </span><span style="color:#9cdcfe">state</span><span style="color:#d4d4d4"> = {</span></div>
<div style="position:absolute;left:0;top:173.94px;line-height:12.6px;"><span style="color:#d4d4d4">        </span><span style="color:#9cdcfe">count</span><span style="color:#d4d4d4">: </span><span style="color:#b5cea8">0</span></div>
<div style="position:absolute;left:0;top:191.72px;line-height:12.6px;"><span style="color:#d4d4d4">    };</span></div>
<div style="position:absolute;left:0;top:227.28px;line-height:12.6px;"><span style="color:#d4d4d4">    </span><span style="color:#dcdcaa">handleClick</span><span style="color:#d4d4d4"> = () </span><span style="color:#569cd6">=&gt;</span><span style="color:#d4d4d4"> {</span></div>
<div style="position:absolute;left:0;top:245.06px;line-height:12.6px;"><span style="color:#d4d4d4">        </span><span style="color:#569cd6">this</span><span style="color:#d4d4d4">.</span><span style="color:#dcdcaa">setState</span><span style="color:#d4d4d4">(({ </span><span style="color:#9cdcfe">count</span><span style="color:#d4d4d4"> }) </span><span style="color:#569cd6">=&gt;</span><span style="color:#d4d4d4"> ({</span></div>
<div style="position:absolute;left:0;top:262.84px;line-height:12.6px;"><span style="color:#d4d4d4">            </span><span style="color:#9cdcfe">count</span><span style="color:#d4d4d4">: </span><span style="color:#9cdcfe">count</span><span style="color:#d4d4d4"> + </span><span style="color:#b5cea8">1</span></div>
<div style="position:absolute;left:0;top:280.62px;line-height:12.6px;"><span style="color:#d4d4d4">        }));</span></div>
<div style="position:absolute;left:0;top:298.40px;line-height:12.6px;"><span style="color:#d4d4d4">    };</span></div>
<div style="position:absolute;left:0;top:316.18px;line-height:12.6px;"><span style="color:#d4d4d4">    </span><span style="color:#dcdcaa">render</span><span style="color:#d4d4d4">() {</span></div>
<div style="position:absolute;left:0;top:333.96px;line-height:12.6px;"><span style="color:#d4d4d4">        </span><span style="color:#c586c0">return</span><span style="color:#d4d4d4"> </span><span style="color:#808080">&lt;</span><span style="color:#569cd6">button</span><span style="color:#d4d4d4"> </span><span style="color:#9cdcfe">onClick</span><span style="color:#d4d4d4">=</span><span style="color:#569cd6">{</span><span style="color:#569cd6">this</span><span style="color:#d4d4d4">.</span><span style="color:#9cdcfe">handleClick</span><span style="color:#569cd6">}</span><span style="color:#808080">&gt;</span><span style="color:#569cd6">{</span><span style="color:#569cd6">this</span><span style="color:#d4d4d4">.</span><span style="color:#9cdcfe">state</span><span style="color:#d4d4d4">.</span><span style="color:#9cdcfe">count</span><span style="color:#569cd6">}</span><span style="color:#808080">&lt;/</span><span style="color:#569cd6">button</span><span style="color:#808080">&gt;</span><span style="color:#d4d4d4">;</span></div>
<div style="position:absolute;left:0;top:351.74px;line-height:12.6px;"><span style="color:#d4d4d4">    }</span></div>
<div style="position:absolute;left:0;top:369.52px;line-height:12.6px;"><span style="color:#d4d4d4">}</span></div>
<div style="position:absolute;left:0;top:405.08px;line-height:12.6px;"><span style="color:#c586c0">export</span><span style="color:#d4d4d4"> </span><span style="color:#c586c0">default</span><span style="color:#d4d4d4"> </span><span style="color:#9cdcfe">LikeCounter</span><span style="color:#d4d4d4">;</span></div>
</div>
<div style="position:absolute;left:1155.2px;top:81.3px;font-family:'Liberation Mono', monospace;font-size:1.5617px;line-height:1.894px;white-space:pre;opacity:1"><span style="color:#c586c0">import</span><span style="color:#d4d4d4"> </span><span style="color:#9cdcfe">React</span><span style="color:#d4d4d4">, { </span><span style="color:#9cdcfe">Component</span><span style="color:#d4d4d4"> } </span><span style="color:#c586c0">from</span><span style="color:#d4d4d4"> </span><span style="color:#ce9178">&#x27;react&#x27;</span><span style="color:#d4d4d4">;</span>&#10;&#10;<span style="color:#569cd6">class</span><span style="color:#d4d4d4"> </span><span style="color:#4ec9b0">LikeCounter</span><span style="color:#d4d4d4"> </span><span style="color:#569cd6">extends</span><span style="color:#d4d4d4"> </span><span style="color:#4ec9b0">Component</span><span style="color:#d4d4d4"> {</span>&#10;&#10;<span style="color:#d4d4d4">    </span><span style="color:#9cdcfe">state</span><span style="color:#d4d4d4"> = {</span>&#10;<span style="color:#d4d4d4">        </span><span style="color:#9cdcfe">count</span><span style="color:#d4d4d4">: </span><span style="color:#b5cea8">0</span>&#10;<span style="color:#d4d4d4">    };</span>&#10;&#10;<span style="color:#d4d4d4">    </span><span style="color:#dcdcaa">handleClick</span><span style="color:#d4d4d4"> = () </span><span style="color:#569cd6">=&gt;</span><span style="color:#d4d4d4"> {</span>&#10;<span style="color:#d4d4d4">        </span><span style="color:#569cd6">this</span><span style="color:#d4d4d4">.</span><span style="color:#dcdcaa">setState</span><span style="color:#d4d4d4">(({ </span><span style="color:#9cdcfe">count</span><span style="color:#d4d4d4"> }) </span><span style="color:#569cd6">=&gt;</span><span style="color:#d4d4d4"> ({</span>&#10;<span style="color:#d4d4d4">            </span><span style="color:#9cdcfe">count</span><span style="color:#d4d4d4">: </span><span style="color:#9cdcfe">count</span><span style="color:#d4d4d4"> + </span><span style="color:#b5cea8">1</span>&#10;<span style="color:#d4d4d4">        }));</span>&#10;<span style="color:#d4d4d4">    };</span>&#10;<span style="color:#d4d4d4">    </span><span style="color:#dcdcaa">render</span><span style="color:#d4d4d4">() {</span>&#10;<span style="color:#d4d4d4">        </span><span style="color:#c586c0">return</span><span style="color:#d4d4d4"> </span><span style="color:#808080">&lt;</span><span style="color:#569cd6">button</span><span style="color:#d4d4d4"> </span><span style="color:#9cdcfe">onClick</span><span style="color:#d4d4d4">=</span><span style="color:#569cd6">{</span><span style="color:#569cd6">this</span><span style="color:#d4d4d4">.</span><span style="color:#9cdcfe">handleClick</span><span style="color:#569cd6">}</span><span style="color:#808080">&gt;</span><span style="color:#569cd6">{</span><span style="color:#569cd6">this</span><span style="color:#d4d4d4">.</span><span style="color:#9cdcfe">state</span><span style="color:#d4d4d4">.</span><span style="color:#9cdcfe">count</span><span style="color:#569cd6">}</span><span style="color:#808080">&lt;/</span><span style="color:#569cd6">button</span><span style="color:#808080">&gt;</span><span style="color:#d4d4d4">;</span>&#10;<span style="color:#d4d4d4">    }</span>&#10;<span style="color:#d4d4d4">}</span>&#10;&#10;<span style="color:#c586c0">export</span><span style="color:#d4d4d4"> </span><span style="color:#c586c0">default</span><span style="color:#d4d4d4"> </span><span style="color:#9cdcfe">LikeCounter</span><span style="color:#d4d4d4">;</span></div>
<div style="position:absolute;left:1268px;top:80px;width:1px;height:580px;background:#2e2e2e;"></div>
<div style="position:absolute;left:1269px;top:80px;width:11px;height:372.8px;background:#464646;"></div>
<div style="position:absolute;left:1269px;top:147.8px;width:11px;height:2.5px;background:#a0a0a0;"></div>
<div style="position:absolute;left:0px;top:660px;width:1280px;height:21px;background:#007acc;"></div>
<svg style="position:absolute;left:11px;top:663.5px;" width="12" height="14" viewBox="0 0 12 14"><circle cx="3" cy="2.6" r="1.6" fill="none" stroke="#fff" stroke-width="1.2"/><circle cx="9" cy="2.6" r="1.6" fill="none" stroke="#fff" stroke-width="1.2"/><circle cx="3" cy="11.4" r="1.6" fill="none" stroke="#fff" stroke-width="1.2"/><path d="M3 4.2v5.6M9 4.2C9 8 3 7 3 9.8" fill="none" stroke="#fff" stroke-width="1.3"/></svg>
<div style="position:absolute;left:23.78px;top:665.44px;font-family:'Liberation Sans', sans-serif;font-size:12px;line-height:12px;font-weight:400;color:#ffffff;white-space:pre;transform:scaleX(0.9515);transform-origin:0 0;">master*</div>
<svg style="position:absolute;left:77px;top:664px;" width="12" height="12" viewBox="0 0 12 12"><path d="M10.2 4.6A4.4 4.4 0 0 0 2 4M1.8 7.4A4.4 4.4 0 0 0 10 8" fill="none" stroke="#fff" stroke-width="1.7"/><path d="M11.3 1v4.6H6.8zM0.7 11V6.4h4.5z" fill="#fff"/></svg>
<svg style="position:absolute;left:103px;top:664.5px;" width="12" height="12" viewBox="0 0 12 12"><circle cx="6" cy="6" r="5.8" fill="#fff"/><path d="M3.6 3.6l4.8 4.8M8.4 3.6l-4.8 4.8" stroke="#007acc" stroke-width="1.5"/></svg>
<div style="position:absolute;left:118.58px;top:665.44px;font-family:'Liberation Sans', sans-serif;font-size:12px;line-height:12px;font-weight:400;color:#ffffff;white-space:pre;transform:scaleX(1.0228);transform-origin:0 0;">0</div>
<svg style="position:absolute;left:128.5px;top:664px;" width="13" height="12" viewBox="0 0 13 12"><path d="M6.5 0.5L12.8 11.6H0.2z" fill="#fff"/><path d="M6.5 4v4.2M6.5 9.2v1.2" stroke="#007acc" stroke-width="1.4"/></svg>
<div style="position:absolute;left:143.68px;top:665.44px;font-family:'Liberation Sans', sans-serif;font-size:12px;line-height:12px;font-weight:400;color:#ffffff;white-space:pre;transform:scaleX(1.1275);transform-origin:0 0;">0</div>
<svg style="position:absolute;left:164.5px;top:663.5px;" width="12" height="14" viewBox="0 0 12 14"><circle cx="2.6" cy="2.6" r="1.6" fill="none" stroke="#fff" stroke-width="1.2"/><circle cx="9.4" cy="11.4" r="1.6" fill="none" stroke="#fff" stroke-width="1.2"/><path d="M2.6 4.2v9M9.4 9.8V4.5Q9.4 2.6 7 2.6H5" fill="none" stroke="#fff" stroke-width="1.3"/><path d="M4.6 0.6v4L2.8 2.6z" fill="#fff"/></svg>
<div style="position:absolute;left:189.68px;top:665.44px;font-family:'Liberation Sans', sans-serif;font-size:12px;line-height:12px;font-weight:400;color:#ffffff;white-space:pre;transform:scaleX(0.8776);transform-origin:0 0;">{..} : Scanning..</div>
<div style="position:absolute;left:874.08px;top:665.44px;font-family:'Liberation Sans', sans-serif;font-size:12px;line-height:12px;font-weight:400;color:#ffffff;white-space:pre;transform:scaleX(0.9000);transform-origin:0 0;">Ln 7, Col 7</div>
<div style="position:absolute;left:940.58px;top:665.44px;font-family:'Liberation Sans', sans-serif;font-size:12px;line-height:12px;font-weight:400;color:#ffffff;white-space:pre;transform:scaleX(0.8869);transform-origin:0 0;">Spaces: 4</div>
<div style="position:absolute;left:1000.88px;top:665.44px;font-family:'Liberation Sans', sans-serif;font-size:12px;line-height:12px;font-weight:400;color:#ffffff;white-space:pre;transform:scaleX(0.9100);transform-origin:0 0;">UTF-8</div>
<div style="position:absolute;left:1045.48px;top:665.44px;font-family:'Liberation Sans', sans-serif;font-size:12px;line-height:12px;font-weight:400;color:#ffffff;white-space:pre;transform:scaleX(0.8308);transform-origin:0 0;">CRLF</div>
<div style="position:absolute;left:1084.88px;top:665.44px;font-family:'Liberation Sans', sans-serif;font-size:12px;line-height:12px;font-weight:400;color:#ffffff;white-space:pre;transform:scaleX(0.9038);transform-origin:0 0;">JavaScript</div>
<div style="position:absolute;left:1164.88px;top:665.44px;font-family:'Liberation Sans', sans-serif;font-size:12px;line-height:12px;font-weight:400;color:#ffffff;white-space:pre;transform:scaleX(0.9294);transform-origin:0 0;">Go Live</div>
<div style="position:absolute;left:1259.28px;top:665.44px;font-family:'Liberation Sans', sans-serif;font-size:12px;line-height:12px;font-weight:400;color:#ffffff;white-space:pre;transform:scaleX(1.1125);transform-origin:0 0;">1</div>
<svg style="position:absolute;left:1149px;top:663.5px;" width="14" height="14" viewBox="0 0 14 14"><circle cx="7" cy="7" r="6" fill="none" stroke="#fff" stroke-width="1.2"/><circle cx="7" cy="7" r="3.3" fill="none" stroke="#fff" stroke-width="1.2"/><circle cx="7" cy="7" r="1.2" fill="#fff"/><path d="M7 7v6.5" stroke="#fff" stroke-width="1.6"/></svg>
<svg style="position:absolute;left:1217.5px;top:664px;" width="13" height="13" viewBox="0 0 13 13"><circle cx="6.5" cy="6.5" r="5.7" fill="none" stroke="#fff" stroke-width="1.3"/><circle cx="4.4" cy="5" r="0.9" fill="#fff"/><circle cx="8.6" cy="5" r="0.9" fill="#fff"/><path d="M3.6 7.6Q6.5 10.6 9.4 7.6" fill="none" stroke="#fff" stroke-width="1.1"/></svg>
<svg style="position:absolute;left:1245px;top:663.5px;" width="12" height="14" viewBox="0 0 12 14"><path d="M6 1.2Q10 1.5 10 6.5V10l1.5 1.5H0.5L2 10V6.5Q2 1.5 6 1.2z" fill="#fff"/><circle cx="6" cy="12.6" r="1.4" fill="#fff"/></svg>
<div style="position:absolute;left:0;top:681px;width:1280px;height:38px;background:linear-gradient(180deg,#02101c 0px,#0b1a27 1px,#8ea8c0 3px,#a6bed6 5px,#8ea4ba 8px,#3d4a56 10px,#1c252e 12px,#161d24 20px,#141a20 38px);"></div>
<svg style="position:absolute;left:0;top:680px" width="50" height="39" viewBox="0 680 50 39"><defs><linearGradient id="og" x1="0" y1="0" x2="0" y2="1"><stop offset="0" stop-color="#9fb6cc"/><stop offset="0.45" stop-color="#5a86ad"/><stop offset="0.5" stop-color="#145a9c"/><stop offset="0.8" stop-color="#1b8fd6"/><stop offset="1" stop-color="#35d0f5"/></linearGradient></defs><circle cx="24.9" cy="701" r="17.3" fill="url(#og)" stroke="#3d5166" stroke-width="1"/><g transform="rotate(8 25 701)"><path d="M17 692q4.5-1.8 9 0.3v7.5q-4.5-2-9-0.3z" fill="#f0601f"/><path d="M27 692.6q4.5 2 9 0v7.5q-4.5 2-9-0.1z" fill="#8dc63f"/><path d="M16.5 700.8q4.5-1.8 9 0.3v7.5q-4.5-2-9-0.3z" fill="#2d9fe0"/><path d="M26.5 701.4q4.5 2 9 0v7.5q-4.5 2-9-0.1z" fill="#f9c211"/></g><ellipse cx="24.9" cy="691.5" rx="13" ry="7" fill="#fff" opacity="0.18"/></svg>
<div style="position:absolute;left:56.3px;top:682.7px;width:54.0px;height:35.1px;background:linear-gradient(180deg,#c2c8ce 0%,#7d868e 22%,#343b42 50%,#22282e 100%);border:1px solid #8a929a;border-radius:3px;box-sizing:border-box;"></div>
<div style="position:absolute;left:114.4px;top:682.7px;width:54.5px;height:35.1px;background:linear-gradient(180deg,#e4e7ea 0%,#c3c8cd 30%,#a4aab0 60%,#9ca2a8 100%);border:1px solid #e8ecef;border-radius:3px;box-sizing:border-box;"></div>
<div style="position:absolute;left:172.6px;top:682.7px;width:54.400000000000006px;height:35.1px;background:linear-gradient(180deg,#c2c8ce 0%,#7d868e 22%,#343b42 50%,#22282e 100%);border:1px solid #8a929a;border-radius:3px;box-sizing:border-box;"></div>
<svg style="position:absolute;left:69px;top:686px;" width="29" height="29" viewBox="0 0 29 29"><path d="M14.5 14.5L2.20 7.40A14.2 14.2 0 0 1 26.80 7.40Z" fill="#db4437"/><path d="M14.5 14.5L26.80 7.40A14.2 14.2 0 0 1 14.50 28.70Z" fill="#fcc934"/><path d="M14.5 14.5L14.50 28.70A14.2 14.2 0 0 1 2.20 7.40Z" fill="#0f9d58"/><circle cx="14.5" cy="14.5" r="6.6" fill="#fff"/><circle cx="14.5" cy="14.5" r="5.1" fill="#4285f4"/></svg>
<svg style="position:absolute;left:127px;top:685.5px;" width="29" height="29" viewBox="0 0 100 100"><path fill="#1b7fd0" d="M96.46 10.8L75.86.87a6.23 6.23 0 00-7.1 1.21L29.35 38.04 12.19 25.01a4.16 4.16 0 00-5.32.24L1.36 30.26a4.16 4.16 0 000 6.16L16.25 50 1.36 63.58a4.16 4.16 0 000 6.16l5.51 5.01a4.16 4.16 0 005.32.24l17.16-13.03 39.41 35.96a6.23 6.23 0 007.1 1.21l20.6-9.92A6.25 6.25 0 00100 83.8V16.2a6.25 6.25 0 00-3.54-5.4zM75.02 72.7L45.11 50l29.91-22.7z"/><path fill="#3cb4f7" d="M75.86.87L96.46 10.8A6.25 6.25 0 0 1 100 16.2V83.8A6.25 6.25 0 0 1 96.46 89.2L75.86 99.13A6.23 6.23 0 0 1 68.76 97.92L75.02 72.7V27.3L68.76 2.08A6.23 6.23 0 0 1 75.86.87z"/></svg>
<svg style="position:absolute;left:186px;top:686px;" width="28" height="28" viewBox="0 0 28 28"><circle cx="14" cy="14" r="13.6" fill="#3ba2dc"/><path d="M6 13.6l14.5-5.8-2.4 12.3-4.6-3.4-2.4 2.3 0.4-3.8 5.6-5.2-7 4.4z" fill="#fff"/></svg>
<div style="position:absolute;left:199.8px;top:707px;width:15px;height:7.6px;background:#6a737c;border-radius:1px;"></div>
<div style="position:absolute;left:200.55px;top:707.65px;font-family:'Liberation Sans', sans-serif;font-size:7.5px;line-height:7.5px;font-weight:400;color:#eeeeee;white-space:pre;transform:scaleX(1.3317);transform-origin:0 0;">.03</div>
<div style="position:absolute;left:230px;top:690px;width:850px;height:29px;background:linear-gradient(72deg,transparent 0%,transparent 22%,rgba(190,210,230,0.07) 26%,rgba(190,210,230,0.07) 50%,transparent 54%,transparent 66%,rgba(190,210,230,0.07) 69%,rgba(190,210,230,0.07) 78%,transparent 81%);"></div>
<div style="position:absolute;left:1079.17px;top:693.11px;font-family:'Liberation Sans', sans-serif;font-size:10.5px;line-height:10.5px;font-weight:400;color:#e6e6e6;white-space:pre;transform:scaleX(1.0251);transform-origin:0 0;">EN</div>
<svg style="position:absolute;left:1109px;top:699.5px;" width="7" height="4" viewBox="0 0 7 4"><path d="M3.5 0L7 4H0z" fill="#e6e6e6"/></svg>
<svg style="position:absolute;left:1128.5px;top:695px;" width="14" height="13" viewBox="0 0 14 13"><rect x="1" y="2" width="8" height="10" fill="none" stroke="#e6e6e6" stroke-width="1.4"/><rect x="3" y="6" width="4" height="5" fill="#e6e6e6"/><path d="M9 3h3v4H9M10.2 1v2M11.8 1v2M10.5 7v3" stroke="#e6e6e6" stroke-width="1" fill="none"/></svg>
<div style="position:absolute;left:1151.5px;top:703.5999999999999px;width:2px;height:2.2px;background:#e6e6e6;"></div>
<div style="position:absolute;left:1154.3px;top:701.4px;width:2px;height:4.4px;background:#e6e6e6;"></div>
<div style="position:absolute;left:1157.1px;top:699.1999999999999px;width:2px;height:6.6000000000000005px;background:#e6e6e6;"></div>
<div style="position:absolute;left:1159.9px;top:697.0px;width:2px;height:8.8px;background:#e6e6e6;"></div>
<div style="position:absolute;left:1162.7px;top:694.8px;width:2px;height:11.0px;background:#e6e6e6;"></div>
<svg style="position:absolute;left:1173px;top:696px;" width="15" height="12" viewBox="0 0 15 12"><path d="M1 4h3l4-3.5v11L4 8H1z" fill="#e6e6e6"/><path d="M9.8 3.5Q11.3 6 9.8 8.5M11.8 1.8Q14.2 6 11.8 10.2" fill="none" stroke="#e6e6e6" stroke-width="1.1"/></svg>
<div style="position:absolute;left:1216.57px;top:688.91px;font-family:'Liberation Sans', sans-serif;font-size:10.5px;line-height:10.5px;font-weight:400;color:#eeeeee;white-space:pre;transform:scaleX(1.0296);transform-origin:0 0;">14:26</div>
<div style="position:absolute;left:1204.57px;top:704.31px;font-family:'Liberation Sans', sans-serif;font-size:10.5px;line-height:10.5px;font-weight:400;color:#eeeeee;white-space:pre;transform:scaleX(0.9714);transform-origin:0 0;">26.07.2019</div>
<div style="position:absolute;left:1267px;top:682px;width:13px;height:37px;background:transparent;border:1px solid #5e6a76;border-right:none;box-sizing:border-box;background:linear-gradient(180deg,rgba(255,255,255,0.15),rgba(255,255,255,0.03));"></div>
</div></body></html>
